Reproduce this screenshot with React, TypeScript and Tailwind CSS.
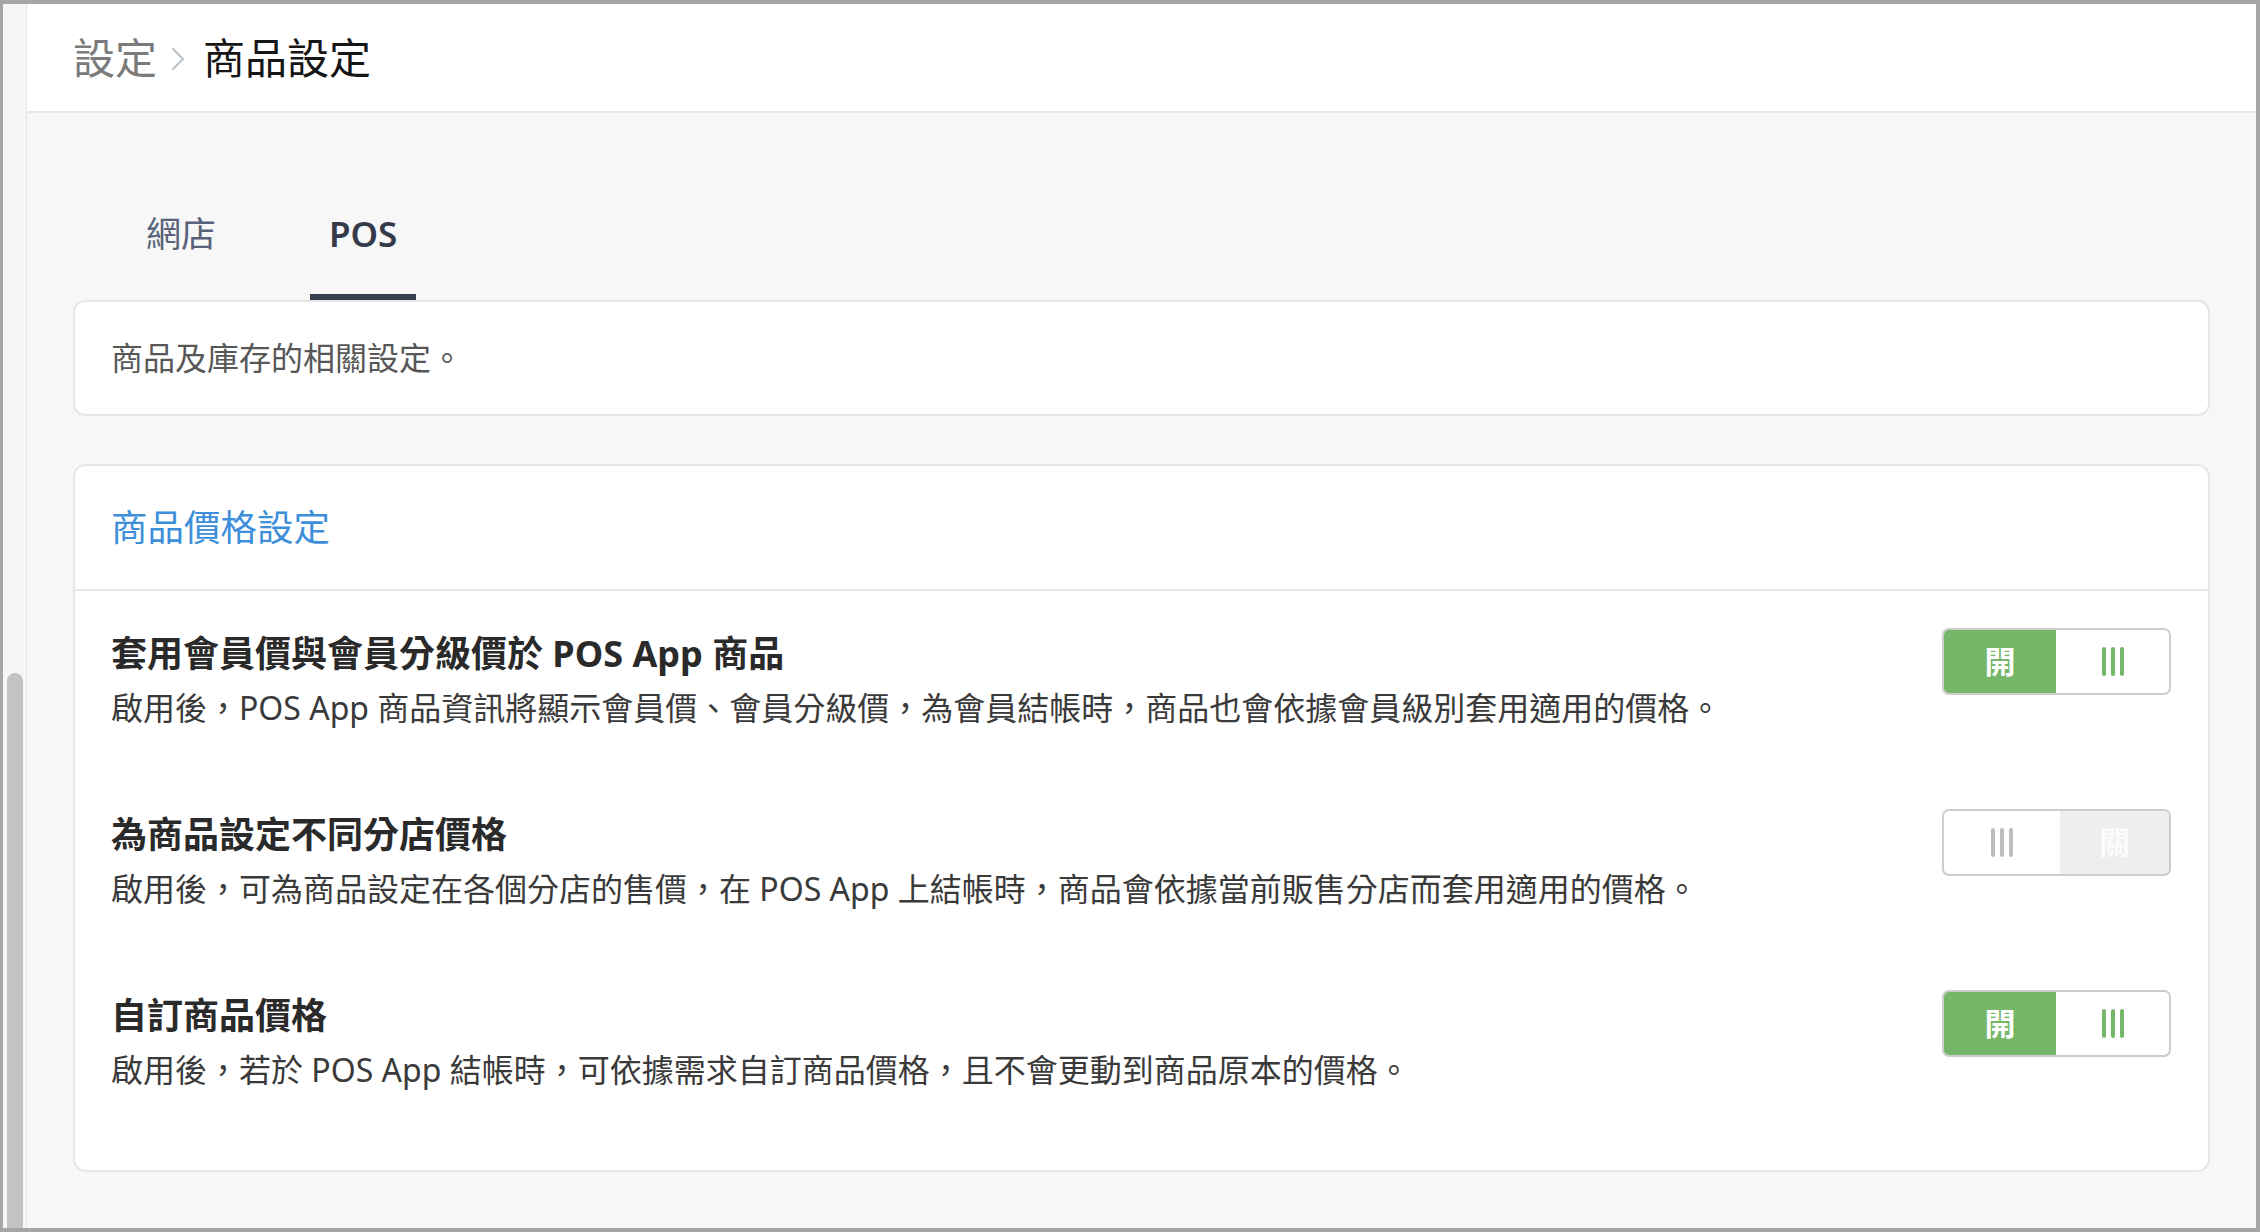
import React, { useState } from 'react';

const FONT = "font-['Noto_Sans','Noto_Sans_CJK_TC',sans-serif]";

interface SettingRow {
  id: string;
  title: string;
  description: string;
  enabled: boolean;
}

const INITIAL_ROWS: SettingRow[] = [
  {
    id: 'member',
    title: '套用會員價與會員分級價於 POS App 商品',
    description: '啟用後，POS App 商品資訊將顯示會員價、會員分級價，為會員結帳時，商品也會依據會員級別套用適用的價格。',
    enabled: true,
  },
  {
    id: 'branch',
    title: '為商品設定不同分店價格',
    description: '啟用後，可為商品設定在各個分店的售價，在 POS App 上結帳時，商品會依據當前販售分店而套用適用的價格。',
    enabled: false,
  },
  {
    id: 'custom',
    title: '自訂商品價格',
    description: '啟用後，若於 POS App 結帳時，可依據需求自訂商品價格，且不會更動到商品原本的價格。',
    enabled: true,
  },
];

const Grip: React.FC<{ color: string }> = ({ color }) => (
  <div className="flex gap-[5px]">
    <span className={`block w-[4px] h-[29px] rounded-[2px] ${color}`} />
    <span className={`block w-[4px] h-[29px] rounded-[2px] ${color}`} />
    <span className={`block w-[4px] h-[29px] rounded-[2px] ${color}`} />
  </div>
);

const OnOffSwitch: React.FC<{ on: boolean; onToggle: () => void }> = ({ on, onToggle }) => (
  <button
    type="button"
    onClick={onToggle}
    className="flex w-[229px] h-[67px] shrink-0 rounded-[7px] border-2 border-[#cdcdcd] bg-white overflow-hidden"
  >
    {on ? (
      <>
        <span className="flex w-[112px] h-full items-center justify-center bg-[#75b669] text-white text-[31px] font-bold leading-none">開</span>
        <span className="flex flex-1 h-full items-center justify-center">
          <Grip color="bg-[#74b768]" />
        </span>
      </>
    ) : (
      <>
        <span className="flex w-[116px] h-full items-center justify-center">
          <Grip color="bg-[#bdbdbd]" />
        </span>
        <span className="flex flex-1 h-full items-center justify-center bg-[#eeeeee] text-[#fcfcfc] text-[31px] font-bold leading-none">關</span>
      </>
    )}
  </button>
);

export default function App() {
  const [tab, setTab] = useState<'web' | 'pos'>('pos');
  const [rows, setRows] = useState<SettingRow[]>(INITIAL_ROWS);

  const toggleRow = (id: string) => {
    setRows(rows.map(r => (r.id === id ? { ...r, enabled: !r.enabled } : r)));
  };

  return (
    <div className={`${FONT} w-[2260px] h-[1232px] bg-[#a6a6a6] pt-[4px] pl-[3px] pr-[4px] pb-[4px] flex overflow-hidden`}>
      {/* scroll strip */}
      <div className="w-[24px] h-full bg-[#f6f6f6] border-r border-[#e6e6e6] flex flex-col items-center">
        <div className="mt-[669px] w-[16px] flex-1 rounded-t-full bg-[#c3c3c3]" />
      </div>

      <div className="flex-1 h-full flex flex-col bg-[#f7f7f7]">
        {/* header */}
        <div className="h-[109px] shrink-0 bg-white border-b-2 border-[#e7e7e7] flex items-center pl-[46px]">
          <span className="text-[42px] text-[#7b7b7b] leading-none">設定</span>
          <svg className="ml-[12px] mr-[16px] mt-[2px]" width="18" height="28" viewBox="0 0 18 28" fill="none">
            <polyline points="4,4 14,14 4,24" stroke="#bcc1cc" strokeWidth="2.2" strokeLinecap="round" strokeLinejoin="round" />
          </svg>
          <span className="text-[42px] text-[#161616] leading-none">商品設定</span>
        </div>

        {/* content */}
        <div className="flex-1 px-[46px]">
          <div className="flex ml-[55px] pt-[59px] gap-[76px]">
            <button
              type="button"
              onClick={() => setTab('web')}
              className={`h-[128px] px-[18px] border-b-[6px] text-[35px] leading-none ${tab === 'web' ? 'border-[#363d4d] text-[#343a4a] font-semibold' : 'border-transparent text-[#58627a]'}`}
            >
              網店
            </button>
            <button
              type="button"
              onClick={() => setTab('pos')}
              className={`h-[128px] px-[19px] border-b-[6px] text-[35px] leading-none ${tab === 'pos' ? 'border-[#363d4d] text-[#343a4a] font-semibold' : 'border-transparent text-[#58627a]'}`}
            >
              POS
            </button>
          </div>

          <div className="h-[116px] bg-white border-2 border-[#e6e6e6] rounded-[12px] flex items-center px-[36px]">
            <p className="text-[32px] text-[#575757]">商品及庫存的相關設定。</p>
          </div>

          <div className="mt-[48px] bg-white border-2 border-[#e6e6e6] rounded-[13px]">
            <div className="h-[125px] border-b-2 border-[#e6e6e6] flex items-center px-[36px]">
              <h2 className="text-[36.5px] text-[#3d8fda] leading-none">商品價格設定</h2>
            </div>
            <div className="flex flex-col gap-[73px] pt-[37px] pb-[72px] pl-[36px] pr-[37px]">
              {rows.map(row => (
                <div key={row.id} className="flex items-start justify-between gap-8">
                  <div className="flex flex-col">
                    <div className="text-[36px] font-bold text-[#2a2a2a] leading-[52px]">{row.title}</div>
                    <div className="text-[32px] text-[#3a3a3a] leading-[56px]">{row.description}</div>
                  </div>
                  <OnOffSwitch on={row.enabled} onToggle={() => toggleRow(row.id)} />
                </div>
              ))}
            </div>
          </div>
        </div>
      </div>
    </div>
  );
}
